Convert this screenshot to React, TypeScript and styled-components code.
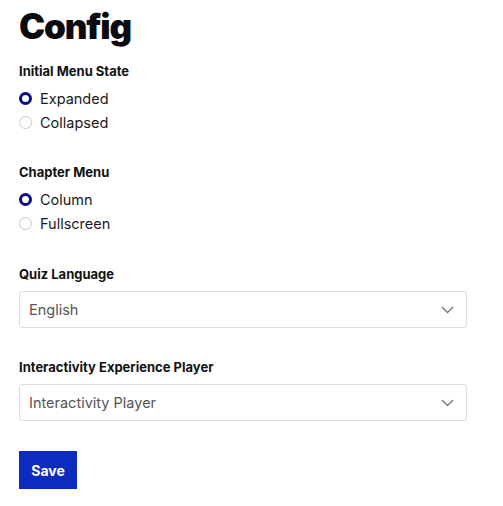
import React, { useState } from 'react';
import styled, { createGlobalStyle } from 'styled-components';

const GlobalStyle = createGlobalStyle`
  body {
    margin: 0;
    background: #fff;
    font-family: Inter, "Noto Sans", Arial, sans-serif;
    color: #111;
  }
`;

const Page = styled.div`
  padding: 4px 19px 16px;
  width: 448px;
`;

const Title = styled.h1`
  margin: 0 0 14px;
  font-size: 35px;
  font-weight: 900;
  line-height: 44px;
  letter-spacing: -1.2px;
  color: #0b0b0f;
`;

const Fieldset = styled.fieldset`
  border: 0;
  margin: 0 0 29px;
  padding: 0;
  display: flex;
  flex-direction: column;

  & + & {
    margin-bottom: 30px;
  }
`;

const Legend = styled.div`
  font-size: 13px;
  font-weight: 700;
  line-height: 18px;
  margin-bottom: 8px;
`;

const GroupLegend = styled(Legend)`
  margin-bottom: 6px;
`;

const Option = styled.label`
  display: flex;
  align-items: center;
  gap: 8px;
  height: 24px;
  font-size: 14.5px;
  color: #1a1a1a;
  cursor: pointer;
`;

const Dot = styled.span<{ $on: boolean }>`
  box-sizing: border-box;
  width: 13px;
  height: 13px;
  border-radius: 50%;
  background: #fff;
  border: ${(p) => (p.$on ? '3.5px solid #0a0a8a' : '1px solid #c8c8c8')};
`;

const Hidden = styled.input`
  display: none;
`;

const Field = styled.div`
  margin-bottom: 30px;
`;

const SelectWrap = styled.div`
  position: relative;
  height: 37px;
  box-sizing: border-box;
  border: 1px solid #dedede;
  border-radius: 3px;
  display: flex;
  align-items: center;
  padding: 0 9px;
  font-size: 14.5px;
  color: #555;
`;

const Chevron = styled.svg`
  position: absolute;
  right: 12px;
  top: 50%;
  margin-top: -4px;
`;

const SaveButton = styled.button`
  border: 0;
  background: #0b2cbf;
  color: #fff;
  font-family: inherit;
  font-size: 14px;
  font-weight: 700;
  width: 58px;
  height: 38px;
  cursor: pointer;
`;

type RadioProps = { name: string; options: string[] };

const RadioGroup = ({ name, options }: RadioProps) => {
  const [value, setValue] = useState(options[0]);
  return (
    <Fieldset>
      <GroupLegend>{name}</GroupLegend>
      {options.map((o) => (
        <Option key={o}>
          <Hidden type="radio" name={name} checked={value === o} onChange={() => setValue(o)} />
          <Dot $on={value === o} />
          {o}
        </Option>
      ))}
    </Fieldset>
  );
};

const Select = ({ label, value }: { label: string; value: string }) => (
  <Field>
    <Legend>{label}</Legend>
    <SelectWrap>
      {value}
      <Chevron width="13" height="8" viewBox="0 0 13 8">
        <path d="M1 1l5.5 5.5L12 1" fill="none" stroke="#777" strokeWidth="1.4" />
      </Chevron>
    </SelectWrap>
  </Field>
);

export default function App() {
  return (
    <>
      <GlobalStyle />
      <Page>
        <Title>Config</Title>
        <RadioGroup name="Initial Menu State" options={['Expanded', 'Collapsed']} />
        <RadioGroup name="Chapter Menu" options={['Column', 'Fullscreen']} />
        <Select label="Quiz Language" value="English" />
        <Select label="Interactivity Experience Player" value="Interactivity Player" />
        <SaveButton>Save</SaveButton>
      </Page>
    </>
  );
}
